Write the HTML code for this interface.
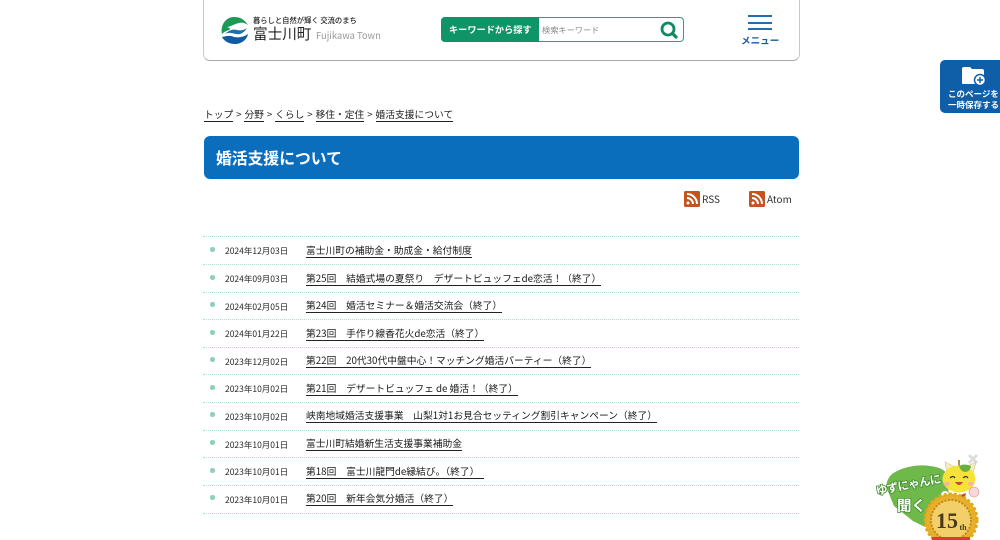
<!DOCTYPE html>
<html lang="ja"><head><meta charset="utf-8"><title>婚活支援について</title>
<style>
html,body{margin:0;padding:0;background:#fff;width:1000px;height:540px;overflow:hidden}
body{font-family:"Liberation Sans","Noto Sans CJK JP",sans-serif;color:#222;position:relative}
.j{font-family:"Noto Sans CJK JP",sans-serif}
.a{position:absolute;white-space:nowrap}
a{color:#222;text-decoration:none;border-bottom:1px solid #222}
.line{position:absolute;left:203px;width:596px;height:0;border-top:1px dotted #b4dcd2}
.dot{position:absolute;left:210px;width:4.500px;height:4.500px;border-radius:50%;background:#8fd0bb}
.date{position:absolute;left:225px;font:8.5px/12px "Noto Sans CJK JP",sans-serif;color:#2a2a2a;white-space:nowrap}
.t{position:absolute;left:306px;font:9.75px/14px "Noto Sans CJK JP",sans-serif;white-space:nowrap;color:#1a1a1a;border-bottom:1px solid #222}
.bc{position:absolute;left:204px;top:107px;font:9.75px/14px "Noto Sans CJK JP",sans-serif;white-space:nowrap;color:#222;word-spacing:.7px}
</style></head><body>

<div class="a" style="left:203px;top:-10px;width:595px;height:69px;border:1px solid #c8c8c8;border-bottom:1px solid #aaa;border-radius:0 0 7px 7px"></div>

<svg class="a" style="left:220px;top:16px" width="29" height="28" viewBox="0 0 29 28">
<path d="M2 18C0 9 6 1 14 1c6 0 10 2 14 8-3-2-6-3-9-2-5 1-9 4-12 4 3 1 4 2 2 3-3 1-5 2-7 4z" fill="#1c9a55"/>
<path d="M5 18c4-4 8-5 12-4s7 0 10-2c-3 5-7 7-11 6s-8-2-11 0z" fill="#1d6fae"/>
<path d="M2 21c4-1 8-2 12 0 5 1 10 0 14-3-1 6-7 10-13 10-6 0-11-3-13-7z" fill="#0f5ca4"/>
</svg>
<div class="a j" style="left:253px;top:14.500px;font-size:7.300px;line-height:12px;font-weight:500;color:#222">暮らしと自然が輝く 交流のまち</div>
<div class="a j" style="left:253px;top:24px;font-size:14.600px;line-height:20px;color:#222">富士川町</div>
<div class="a j" style="left:316px;top:28.500px;font-size:9.400px;line-height:13px;color:#999">Fujikawa Town</div>

<div class="a" style="left:441px;top:17px;width:241px;height:23px;border:1px solid #2f9d7c;border-radius:4px;background:#fff"></div>
<div class="a j" style="left:441px;top:17px;width:98px;height:25px;background:#0f9468;border-radius:4px 0 0 4px;color:#fff;font-size:9.200px;font-weight:700;line-height:24px;text-indent:8px">キーワードから探す</div>
<div class="a j" style="left:542px;top:23.500px;font-size:8.200px;line-height:12px;color:#888">検索キーワード</div>
<svg class="a" style="left:660px;top:21px" width="18" height="18" viewBox="0 0 18 18"><circle cx="8" cy="8" r="6" fill="none" stroke="#0f8a62" stroke-width="2.800"/><path d="M12.500 12.500l3.500 3.500" stroke="#0f8a62" stroke-width="3.200" stroke-linecap="round"/></svg>

<div class="a" style="left:748px;top:15px;width:24px;height:2px;background:#1e6fb5"></div>
<div class="a" style="left:748px;top:21.500px;width:24px;height:2px;background:#1e6fb5"></div>
<div class="a" style="left:748px;top:28px;width:24px;height:2px;background:#1e6fb5"></div>
<div class="a j" style="left:741px;top:33px;font-size:9.600px;line-height:14px;font-weight:700;color:#1a5a9c">メニュー</div>

<div class="a" style="left:940px;top:60px;width:70px;height:53px;background:#0f5ea8;border-radius:5px"></div>
<svg class="a" style="left:960px;top:65px" width="28" height="24" viewBox="0 0 28 24"><path d="M2 4q0-2 2-2h6l2 2h10q2 0 2 2v12q0 1-2 1H3q-1 0-1-1z" fill="#fff"/><circle cx="20" cy="15" r="5.500" fill="#fff" stroke="#0f5ea8" stroke-width="1.500"/><path d="M20 12v6M17 15h6" stroke="#0f5ea8" stroke-width="1.500"/></svg>
<div class="a j" style="left:948px;top:88.500px;font-size:8.500px;line-height:11px;font-weight:700;color:#fff">このページを<br>一時保存する</div>

<div class="bc"><a>トップ</a> &gt; <a>分野</a> &gt; <a>くらし</a> &gt; <a>移住・定住</a> &gt; <a>婚活支援について</a></div>

<div class="a j" style="left:203.500px;top:136px;width:583px;height:43px;padding-left:12.500px;background:#0a6ebd;border-radius:6px;color:#fff;font-size:15.800px;font-weight:700;line-height:43px">婚活支援について</div>

<svg class="a" style="left:684px;top:191px" width="16" height="16" viewBox="0 0 16 16"><rect width="16" height="16" rx="1.500" fill="#c4531f"/><circle cx="4" cy="12" r="1.500" fill="#fff"/><path d="M3 7a6 6 0 0 1 6 6M3 3a10 10 0 0 1 10 10" fill="none" stroke="#fff" stroke-width="2"/></svg>
<div class="a j" style="left:702px;top:192px;font-size:10px;line-height:14px;color:#333">RSS</div>
<svg class="a" style="left:749px;top:191px" width="16" height="16" viewBox="0 0 16 16"><rect width="16" height="16" rx="1.500" fill="#c4531f"/><circle cx="4" cy="12" r="1.500" fill="#fff"/><path d="M3 7a6 6 0 0 1 6 6M3 3a10 10 0 0 1 10 10" fill="none" stroke="#fff" stroke-width="2"/></svg>
<div class="a j" style="left:767px;top:192px;font-size:10px;line-height:14px;color:#333">Atom</div>

<div class="line" style="top:236px"></div>
<div class="dot" style="top:247px"></div><div class="date" style="top:245px">2024年12月03日</div><div class="t" style="top:243px">富士川町の補助金・助成金・給付制度</div>
<div class="line" style="top:264px"></div>
<div class="dot" style="top:275px"></div><div class="date" style="top:273px">2024年09月03日</div><div class="t" style="top:271px">第25回　結婚式場の夏祭り　デザートビュッフェde恋活！（終了）</div>
<div class="line" style="top:292px"></div>
<div class="dot" style="top:302px"></div><div class="date" style="top:301px">2024年02月05日</div><div class="t" style="top:298px">第24回　婚活セミナー＆婚活交流会（終了）</div>
<div class="line" style="top:319px"></div>
<div class="dot" style="top:330px"></div><div class="date" style="top:328px">2024年01月22日</div><div class="t" style="top:326px">第23回　手作り線香花火de恋活（終了）</div>
<div class="line" style="top:347px"></div>
<div class="dot" style="top:357px"></div><div class="date" style="top:356px">2023年12月02日</div><div class="t" style="top:353px">第22回　20代30代中盤中心！マッチング婚活パーティー（終了）</div>
<div class="line" style="top:374px"></div>
<div class="dot" style="top:385px"></div><div class="date" style="top:383px">2023年10月02日</div><div class="t" style="top:381px">第21回　デザートビュッフェ de 婚活！（終了）</div>
<div class="line" style="top:402px"></div>
<div class="dot" style="top:412px"></div><div class="date" style="top:411px">2023年10月02日</div><div class="t" style="top:408px">峡南地域婚活支援事業　山梨1対1お見合セッティング割引キャンペーン（終了）</div>
<div class="line" style="top:430px"></div>
<div class="dot" style="top:440px"></div><div class="date" style="top:439px">2023年10月01日</div><div class="t" style="top:436px">富士川町結婚新生活支援事業補助金</div>
<div class="line" style="top:457px"></div>
<div class="dot" style="top:468px"></div><div class="date" style="top:466px">2023年10月01日</div><div class="t" style="top:464px;padding-right:5px">第18回　富士川龍門de縁結び。（終了）</div>
<div class="line" style="top:485px"></div>
<div class="dot" style="top:495px"></div><div class="date" style="top:494px">2023年10月01日</div><div class="t" style="top:491px">第20回　新年会気分婚活（終了）</div>
<div class="line" style="top:513px"></div>

<svg class="a" style="left:870px;top:445px" width="130" height="95" viewBox="0 0 130 95">
<path d="M22 29C32 22 48 19 60 21c8 1 14 3 17 8l2 22-16 14-8 17-12-6-19-15-7-17c-1-6 0-10 5-15z" fill="#6fb94a"/>
<path d="M100 9l3 3 3-3 2 2-3 3 3 3-2 2-3-3-3 3-2-2 3-3-3-3z" fill="#dcdcdc"/>
<path d="M75 17l2 12 8-7z" fill="#f4ecc8" stroke="#d8c088" stroke-width=".6"/>
<path d="M106 17l-3 12-8-7z" fill="#f4ecc8" stroke="#d8c088" stroke-width=".6"/>
<path d="M89 22l0-7" stroke="#8a6a2a" stroke-width="1.500"/>
<ellipse cx="89" cy="34" rx="16.500" ry="13.500" fill="#f7e23a"/>
<path d="M89 21q5-3 12 0-1 6-6 6-4 0-6-6z" fill="#6ab040"/>
<path d="M80 33q3-3 5 0M93 33q3-3 5 0" fill="none" stroke="#333" stroke-width="1.200"/>
<path d="M85 37q4 6 8 0z" fill="#c44"/>
<ellipse cx="77" cy="39" rx="3" ry="2" fill="#f5b5a5"/><ellipse cx="101" cy="39" rx="3" ry="2" fill="#f5b5a5"/>
<path d="M80 48l8 3 8-3-1 4H81z" fill="#c8402a"/>
<circle cx="104" cy="47" r="5" fill="#f8d8d8" stroke="#e09080" stroke-width=".6"/>
<circle cx="75" cy="50" r="4" fill="#fff" stroke="#ccc" stroke-width=".5"/>
<circle cx="81" cy="75" r="26" fill="#e8b02a" stroke="#e0a81e" stroke-width="3" stroke-dasharray="3 2"/>
<circle cx="81" cy="75" r="20" fill="#f3cf6a" stroke="#bd8b1c" stroke-width="2" stroke-dasharray="2 1.500"/>
<rect x="62" y="92" width="38" height="3" fill="#d8402a"/>
<text x="77" y="83" font-family="Liberation Serif,serif" font-size="22" font-weight="700" fill="#4a3a1c" text-anchor="middle">15</text>
<text x="93" y="85" font-family="Liberation Serif,serif" font-size="8" font-weight="700" fill="#4a3a1c" text-anchor="middle">th</text>
<g font-family="Noto Sans CJK JP,sans-serif" font-weight="700" fill="#fff" stroke="#3f8a2c" stroke-width="1.600" paint-order="stroke">
<text x="7" y="50" font-size="11.500" textLength="66" transform="rotate(-11 7 50)">ゆずにゃんに</text>
<text x="27" y="66" font-size="14.500">聞く</text>
</g>
</svg>
</body></html>
